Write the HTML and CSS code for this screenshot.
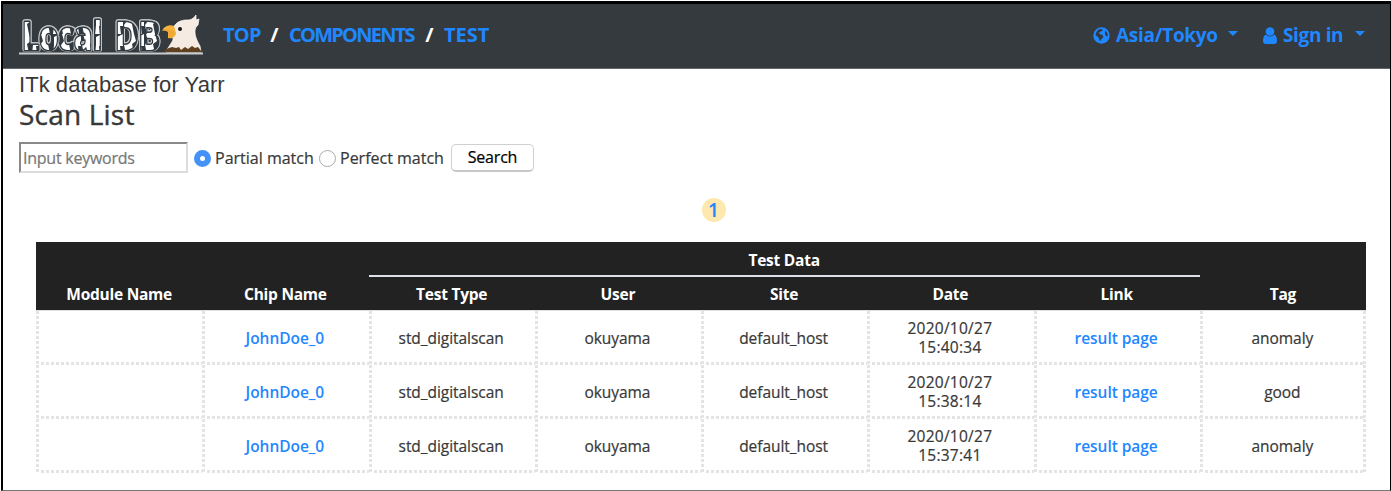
FILE: index.html
```html
<!DOCTYPE html>
<html lang="en">
<head>
<meta charset="utf-8">
<title>Local DB - Scan List</title>
<link rel="stylesheet" href="styles.css">
</head>
<body>
<div class="frame">
  <header class="navbar">
    <svg class="logo" width="188" height="60" viewBox="0 -8 188 60" role="img" aria-label="Local DB">
      <defs>
        <pattern id="patches" width="21" height="20" patternUnits="userSpaceOnUse">
          <rect width="21" height="20" fill="#303840"/>
          <path d="M2 0h9l2 7-4 3 2 10H3L1 11l3-4zM15 3l6-3v12l-3 0 1 8h-5l1-9z" fill="#fff"/>
        </pattern>
      </defs>
      <g class="wordmark">
        <text x="4" y="36" textLength="80" lengthAdjust="spacingAndGlyphs">Local</text>
        <text x="97" y="36" textLength="45" lengthAdjust="spacingAndGlyphs">DB</text>
      </g>
      <path d="M1 38.500h184v2H1z" fill="#c9cccd"/>
      <path d="M148 38c2-5 5-8 7-12 0-5-2-8 0-12 3-6 8-8 14-8 4 0 6-1 9-5l0 5 3-1-1 6-2 2c-3 6 1 14 4 19l1 6z" fill="#f5ebe2" stroke="#fff" stroke-width=".7"/>
      <path d="M146 38c1-3 5-4 8-5l4 1 3-1 2 3 4-3 3 2 4-3 3 2 3-1 4 5z" fill="#60401f"/>
      <path d="M156 12c-5-2-10 0-12 5 3-1 5 0 6 1v6c4 1 8-1 8-5z" fill="#f3b33c"/>
      <path d="M145 16c4-2 7 0 12 2-1 3-3 5-6 6v-6z" fill="#f0a834"/>
      <circle cx="162" cy="15" r="2" fill="#151515"/>
    </svg>
    <nav class="crumbs"><a class="c-top">TOP</a><span>/</span><a class="c-comp">COMPONENTS</a><span>/</span><a class="c-test">TEST</a></nav>
    <div class="account">
      <a class="zone"><svg width="17" height="17" viewBox="0 0 17 17"><circle cx="8.500" cy="8.500" r="8.200" fill="#1f87ff"/><path d="M5.500 2.500l3-.5 1.500 1-2 1.500-2 1 .5 1.500 3 1 1 2-2.500 2.500-1 2-1.500-4-3-2.500 1-3zM12 3.500l2 2 1 3-1.500 1-1.500-2z" fill="#343a40"/></svg><span class="zone-label">Asia/Tokyo</span><i class="caret"></i></a>
      <a class="sign"><svg width="14" height="17" viewBox="0 0 14 17"><circle cx="7" cy="4.500" r="4.300" fill="#1f87ff"/><path d="M3 7.500c2 2.500 6 2.500 8 0 2 .5 3 3.500 3 6.500 0 2-1 3-3 3H3c-2 0-3-1-3-3 0-3 1-6 3-6.500z" fill="#1f87ff"/></svg><span class="sign-label">Sign in</span><i class="caret"></i></a>
    </div>
  </header>
  <main>
    <div class="tagline">ITk database for Yarr</div>
    <h1>Scan List</h1>
    <form class="search">
      <input type="text" placeholder="Input keywords">
      <i class="radio on"></i><label class="partial">Partial match</label>
      <i class="radio"></i><label class="perfect">Perfect match</label>
      <button type="button">Search</button>
    </form>
    <div class="pages"><a>1</a></div>
    <table>
      <thead>
        <tr><th rowspan="2">Module Name</th><th rowspan="2">Chip Name</th><th colspan="5" class="group">Test Data</th><th rowspan="2">Tag</th></tr>
        <tr><th>Test Type</th><th>User</th><th>Site</th><th>Date</th><th>Link</th></tr>
      </thead>
      <tbody>
        <tr><td></td><td><a>JohnDoe_0</a></td><td>std_digitalscan</td><td>okuyama</td><td>default_host</td><td class="date">2020/10/27<br>15:40:34</td><td><a>result page</a></td><td>anomaly</td></tr>
        <tr><td></td><td><a>JohnDoe_0</a></td><td>std_digitalscan</td><td>okuyama</td><td>default_host</td><td class="date">2020/10/27<br>15:38:14</td><td><a>result page</a></td><td>good</td></tr>
        <tr><td></td><td><a>JohnDoe_0</a></td><td>std_digitalscan</td><td>okuyama</td><td>default_host</td><td class="date">2020/10/27<br>15:37:41</td><td><a>result page</a></td><td>anomaly</td></tr>
      </tbody>
    </table>
  </main>
</div>
</body>
</html>
```
FILE: styles.css
```css
* { box-sizing: border-box; }
body { margin: 0; background: #fff; color: #383838; font-family: "Trebuchet MS", "Open Sans", sans-serif; font-size: 15px; overflow: hidden; }
.frame { height: 490px; margin: 1px 0 0 1px; border: solid #000; border-width: 3px 1px 1px 2px; border-bottom-color: #777; }
.navbar { height: 65px; background: #353a3e; border-bottom: 1px solid #62676b; display: flex; align-items: flex-start; padding: 8px 25px 0 15px; }
a { color: #1f87ff; }
.logo { display: block; flex: none; margin-top: -6px; }
.wordmark { font: 700 39px "Open Sans", sans-serif; fill: url(#patches); stroke: #303840; stroke-width: 3px; stroke-linejoin: round; paint-order: stroke; filter: drop-shadow(1px 0 0 #c2c6c8) drop-shadow(-1px 0 0 #c2c6c8) drop-shadow(0 -1px 0 #c2c6c8); }
.crumbs { display: flex; margin: 11px 0 0 17px; font-size: 20px; line-height: 24px; font-weight: 700; color: #fff; }
.crumbs a, .crumbs span { white-space: nowrap; }
.crumbs span { width: 29px; text-align: center; }
.crumbs a { letter-spacing: -.8px; }
.c-top { width: 37px; }
.crumbs .c-comp { width: 126px; letter-spacing: -1.750px; }
.crumbs .c-test { width: 48px; letter-spacing: 0; }
.account { margin: 11px 0 0 auto; display: flex; font-weight: 700; font-size: 19px; line-height: 24px; white-space: nowrap; }
.zone, .sign { display: flex; align-items: center; }
.zone { gap: 6px; margin-right: 25px; }
.sign { gap: 6px; }
.zone-label { width: 101px; letter-spacing: -.3px; }
.sign-label { width: 61px; letter-spacing: -.35px; }
.caret { border: 5px solid transparent; border-top-color: #1f87ff; border-bottom: 0; margin: -4px 0 0 5px; }
main { padding: 3px 16px 0; }
.tagline { font: 22px/26px "Liberation Sans", Arial, sans-serif; letter-spacing: .05px; }
h1 { margin: -2px 0 0; font-size: 28px; font-weight: 400; line-height: 36px; letter-spacing: .2px; -webkit-text-stroke: .4px #383838; }
.search { display: flex; align-items: center; height: 34px; margin-top: 8px; font-size: 16px; white-space: nowrap; -webkit-text-stroke: .2px; }
input { width: 169px; height: 31px; margin: 0 6px 0 0; border: 2px inset #ddd; padding: 2px 2px 0; font: 16px "Open Sans", sans-serif; letter-spacing: -.25px; }
input::placeholder { color: #777; }
.radio { width: 17px; height: 17px; flex: none; border: 1px solid #aaa; border-radius: 50%; position: relative; top: 1px; }
.radio.on { border: 6px solid #4592f7; }
.partial, .perfect { margin-left: 4px; padding-top: 1px; }
.partial { width: 104px; }
.perfect { width: 111px; }
button { width: 83px; height: 28px; background: #fff; border: 1px solid #d0d0d0; border-bottom: 2px solid #c8c8c8; border-radius: 5px; font: 16px "Open Sans", sans-serif; letter-spacing: -.2px; color: #000; padding: 0; margin-top: 1px; }
.pages { height: 68px; display: flex; justify-content: center; padding: 24px 0 0 34px; }
.pages a { width: 24px; height: 24px; border-radius: 50%; background: #ffe8ae; text-align: center; line-height: 24px; font-size: 20px; font-weight: 600; }
table { width: 1330px; margin-left: 17px; table-layout: fixed; border-spacing: 0; text-align: center; }
th { height: 34px; padding: 0 0 5px; background: #222; color: #fff; font-size: 15.500px; letter-spacing: -.25px; line-height: 21px; vertical-align: bottom; }
thead tr:last-child th, th[rowspan] { border-bottom: 1px solid #dee2e6; }
.group { border-bottom: 2px solid #dee2e6; padding-bottom: 4px; height: 35px; }
td { height: 54px; padding: 0 1px 0 0; line-height: 20px; font-size: 15.500px; letter-spacing: -.05px; -webkit-text-stroke: .2px; background:
  repeating-linear-gradient(to bottom, #e4e4e4 0 3px, #fff 3px 5px) left top / 3px 100% no-repeat,
  repeating-linear-gradient(to right, #e4e4e4 0 3px, #fff 3px 5px) left bottom / 100% 3px no-repeat; }
td:last-child { background:
  repeating-linear-gradient(to bottom, #e4e4e4 0 3px, #fff 3px 5px) left top / 3px 100% no-repeat,
  repeating-linear-gradient(to bottom, #e4e4e4 0 3px, #fff 3px 5px) right top / 3px 100% no-repeat,
  repeating-linear-gradient(to right, #e4e4e4 0 3px, #fff 3px 5px) left bottom / 100% 3px no-repeat; }
.date { line-height: 19px; letter-spacing: .25px; }
td a { font-weight: 600; -webkit-text-stroke: 0; }
```
